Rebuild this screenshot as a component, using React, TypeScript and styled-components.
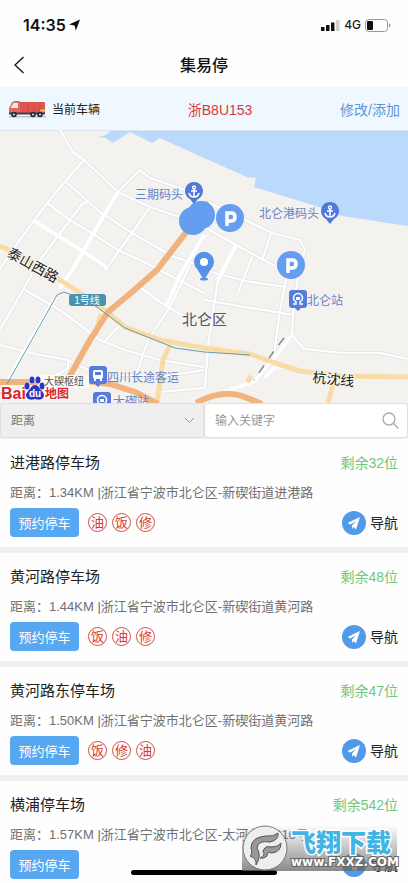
import React from "react";
import styled, { createGlobalStyle } from "styled-components";

const SANS = '"Liberation Sans", "Noto Sans CJK SC", sans-serif';

const GlobalStyle = createGlobalStyle`
  * { box-sizing: border-box; }
  body { margin: 0; background: #fefefe; }
  button, input, select { font-family: inherit; }
`;

const Screen = styled.div`
  position: relative;
  display: flex;
  flex-direction: column;
  height: 100vh;
  overflow: hidden;
  background: #fefefe;
  color: #222;
  font-family: ${SANS};
`;

const StatusBar = styled.div`
  display: flex;
  align-items: center;
  justify-content: space-between;
  flex: none;
  height: 44px;
  padding: 6px 17px 0 23px;
`;

const Clock = styled.div`
  display: flex;
  align-items: center;
  gap: 3px;
  color: #111;
  font: 600 16px/20px Inter, sans-serif;
`;

const Signals = styled.div`
  display: flex;
  align-items: center;
  gap: 4px;
  color: #222;
  font: 500 12px/20px Inter, sans-serif;
`;

const NavBar = styled.header`
  display: grid;
  grid-template-columns: 44px 1fr 44px;
  align-items: center;
  flex: none;
  height: 43px;
`;

const BackButton = styled.button`
  display: flex;
  align-items: center;
  height: 40px;
  padding: 0 0 2px 13px;
  border: 0;
  background: none;
`;

const PageTitle = styled.h1`
  margin: 0;
  text-align: center;
  color: #111;
  font-size: 16px;
  line-height: 24px;
  font-weight: 500;
`;

const VehicleBar = styled.section`
  display: flex;
  justify-content: space-between;
  align-items: center;
  flex: none;
  height: 43px;
  padding: 0 8px;
  background: #f0f8ff;
`;

const CurrentVehicle = styled.div`
  display: flex;
  align-items: center;
  gap: 5px;
  font-size: 12px;
`;

const Plate = styled.strong`
  font-size: 14px;
  font-weight: 400;
  color: #d83a3e;
`;

const EditLink = styled.a`
  font-size: 14px;
  color: #5d95dc;
  text-decoration: none;
`;

const MapArea = styled.section`
  flex: none;
  height: 273px;
  background: #f3f2ef;
  overflow: hidden;
  svg { display: block; width: 100%; height: 100%; }
`;

const Filters = styled.form`
  display: grid;
  grid-template-columns: 1fr 1fr;
  flex: none;
  height: 36px;
  background: #eee;
`;

const Field = styled.label<{ $shade: string }>`
  display: flex;
  align-items: center;
  height: 35px;
  padding: 0 8px 0 10px;
  border: 1px solid #e0e0e0;
  border-radius: 4px;
  background: ${(p) => p.$shade};
`;

const SortSelect = styled.select`
  flex: 1;
  min-width: 0;
  padding: 0;
  border: 0;
  appearance: none;
  background: transparent;
  color: #777;
  font-size: 12px;
  line-height: 20px;
  outline: none;
`;

const SearchInput = styled.input`
  flex: 1;
  min-width: 0;
  padding: 0;
  border: 0;
  background: transparent;
  font-size: 12px;
  line-height: 20px;
  outline: none;
  &::placeholder { color: #999; opacity: 1; }
`;

const LotList = styled.ul`
  flex: 1;
  min-height: 0;
  margin: 0;
  padding: 0;
  overflow-y: auto;
  scrollbar-width: none;
  list-style: none;
`;

const LotItem = styled.li`
  padding: 12px 10px 10px;
  border-bottom: 6px solid #f0f0f0;
`;

const LotRow = styled.div`
  display: flex;
  align-items: center;
  justify-content: space-between;
`;

const LotName = styled.h2`
  margin: 0;
  font-size: 15px;
  line-height: 24px;
  font-weight: 400;
`;

const Remaining = styled.span`
  font-size: 14px;
  line-height: 24px;
  color: #70c77c;
`;

const Address = styled.p`
  margin: 8px 0 5px;
  font-size: 13px;
  line-height: 20px;
  color: #707070;
  white-space: nowrap;
`;

const Actions = styled.div`
  display: flex;
  align-items: center;
  gap: 5px;
`;

const ReserveButton = styled.button`
  width: 69px;
  height: 29px;
  margin-right: 4px;
  padding: 0;
  border: 0;
  border-radius: 4px;
  background: #58a7f1;
  color: #fff;
  font-size: 13px;
`;

const Tag = styled.span`
  display: flex;
  align-items: center;
  justify-content: center;
  width: 19px;
  height: 19px;
  border: 1px solid #e04a45;
  border-radius: 50%;
  color: #dc3632;
  font-size: 13px;
  line-height: 17px;
`;

const NavigateButton = styled.button`
  display: flex;
  align-items: center;
  gap: 4px;
  padding: 0;
  border: 0;
  background: none;
  color: #222;
  font-size: 14px;
  line-height: 24px;
`;

const HomeIndicator = styled.div`
  position: absolute;
  bottom: 8px;
  left: 50%;
  width: 146px;
  height: 5px;
  margin-left: -73px;
  border-radius: 3px;
  background: #000;
`;

const Watermark = styled.div`
  position: absolute;
  right: 11px;
  bottom: 12px;
  display: flex;
  align-items: center;
  gap: 3px;
  height: 46px;
  width: 155px;
  background: linear-gradient(rgba(120, 120, 120, 0), rgba(100, 100, 100, 0.75));
  svg { flex: none; }
`;

const MarkText = styled.div`
  display: flex;
  flex-direction: column;
  white-space: nowrap;
`;

const MarkName = styled.span`
  color: #41b4e6;
  font: 900 25px/28px "Noto Sans CJK SC", sans-serif;
  -webkit-text-stroke: 3px #fff;
  paint-order: stroke fill;
`;

const MarkSite = styled.span`
  color: #fff;
  font: 700 12px/14px "DejaVu Sans", sans-serif;
  -webkit-text-stroke: 2px #666;
  paint-order: stroke fill;
`;

const Truck = () => (
  <svg width="39" height="18" viewBox="0 0 39 18" aria-hidden="true">
    <path d="M1 16h37v1.500H1z" fill="#b9c1cb" />
    <path d="M12 2h25v11H12z" fill="#df544f" />
    <path d="M20 2v11M26 2v11M32 2v11" stroke="#cf4844" />
    <path d="M1 13V8l3-5.500Q5 1 7 1h5v12z" fill="#e8645c" />
    <path d="M2.500 8L5.500 3H10v5z" fill="#e3f3fb" />
    <path d="M1 12.500h36v2H1z" fill="#3b4356" />
    <path d="M32 9.500h5v2h-5z" fill="#f4c04b" />
    {[6, 25, 32].map((x) => (
      <g key={x}>
        <circle cx={x} cy="14.500" r="2.800" fill="#262c40" />
        <circle cx={x} cy="14.500" r="1.100" fill="#cfd5de" />
      </g>
    ))}
  </svg>
);

const thinRoads = [
  "M60 0L73 22L84 30L118 62L150 77L180 87",
  "M84 30L62 55L47 73L33 92L14 118L0 139",
  "M118 62L140 40L150 48L185 60",
  "M66 52L100 82L132 103L172 126L204 137",
  "M47 73L70 90L90 102L118 120L146 133L175 148L204 163",
  "M88 71L80 76L78 80L70 90L40 130L20 165L0 200",
  "M150 77L132 103L118 122L105 141",
  "M208 72L245 90L272 103L300 110L305 120L300 135",
  "M196 92L236 115L275 136",
  "M271 104L262 130",
  "M252 127L237 165",
  "M25 160L60 180L100 210L125 220L160 230L204 237",
  "M120 195L105 211",
  "M0 215L40 225L68 230L88 240",
  "M68 230V238L52 248",
  "M136 154L160 172L180 184L204 190",
  "M190 135L170 177L148 210L136 245",
  "M120 245L165 246L204 240",
  "M160 262L204 258",
  "M204 170L245 177L294 185",
  "M218 150L213 182L208 215L205 258",
  "M204 140L245 151L286 157",
  "M287 145L280 180L274 226",
  "M298 145L293 185L292 205L304 219L345 223L380 223L408 229",
];

const thickRoads = [
  "M118 62L100 92L73 139L60 158",
  "M33 90L98 131L108 139",
  "M236 115L218 150",
  "M204 105L180 145L166 177",
  "M56 166L6 254",
  "M265 247L276 236L290 238",
];

const ParkingPin = ({ x, y }: { x: number; y: number }) => (
  <g transform={`translate(${x} ${y})`}>
    <circle r="14" fill="#659df0" />
    <path d="M-3 8V-5H1Q5-5 5-1T1 3H-3" fill="none" stroke="#fff" strokeWidth="3.500" />
  </g>
);

const HarbourPin = ({ x, y }: { x: number; y: number }) => (
  <g transform={`translate(${x} ${y})`}>
    <path d="M0 12L-4 7A9 9 0 1 1 4 7Z" fill="#5378dc" />
    <circle cy="-4.500" r="1.500" fill="none" stroke="#fff" strokeWidth="1.300" />
    <path d="M0-3V5M-3-1H3M-5 1Q-4 5 0 5Q4 5 5 1" fill="none" stroke="#fff" strokeWidth="1.500" />
  </g>
);

const StationPin = ({ x, y, bus }: { x: number; y: number; bus?: boolean }) => (
  <g transform={`translate(${x} ${y})`}>
    <path d="M-6-9H6Q9-9 9-6V6Q9 9 6 9H3L0 12L-3 9H-6Q-9 9-9 6V-6Q-9-9-6-9Z" fill="#567cdc" />
    {bus ? (
      <>
        <rect x="-5" y="-5" width="10" height="9" rx="2" fill="#fff" />
        <path d="M-3-3H3V0H-3Z" fill="#567cdc" />
        <path d="M-3 4V6M3 4V6" stroke="#fff" strokeWidth="2" />
      </>
    ) : (
      <>
        <path d="M-5 5H-2V3A4.500 4.500 0 1 1 2 3V5H5" fill="none" stroke="#fff" strokeWidth="1.500" />
        <path d="M-2 1V-2H2V1Z" fill="#fff" />
      </>
    )}
  </g>
);

const CityMap = () => (
  <svg viewBox="0 0 408 273" preserveAspectRatio="xMidYMid slice" role="img" aria-label="停车场地图" fontFamily={SANS}>
    <path fill="#bbd9fa" d="M97 7L104 6L112 0H408V96L342 86L319 77L254 57L256 48L247 47L204 28L160 8L152 13L130 2L113 13L106 8Z" />
    <path d="M0 .5H408" stroke="#dbe3f0" />
    <g fill="none" strokeLinejoin="round">
      {thinRoads.map((d) => <path key={d} d={d} stroke="#e6e5eb" strokeWidth="4" />)}
      {thickRoads.map((d) => <path key={d} d={d} stroke="#eeecf1" strokeWidth="5" />)}
      {thinRoads.map((d) => <path key={d} d={d} stroke="#fff" strokeWidth="2.200" />)}
      {thickRoads.map((d) => <path key={d} d={d} stroke="#fff" strokeWidth="4" />)}
      <path d="M292 205L274 228L254 252L204 268" stroke="#fff" strokeWidth="3" />
      <path d="M284 208L274 221L254 250" stroke="#888" strokeWidth="1.500" strokeDasharray="9 8" />
      <g stroke="#f9dca5">
        <path d="M0 116L20 125L60 150L85 166L107 182L125 197L160 210L204 218L250 224L275 233L300 241L340 246L408 247" strokeWidth="5" />
        <path d="M170 215L163 230L157 273M101 184L95 205M335 248L328 273M251 246L247 252" strokeWidth="5" />
      </g>
      <g stroke="#f1b37e">
        <path d="M194 92L157 140L132 162L108 182L90 210L68 249" strokeWidth="6" />
        <path d="M0 252H40M65 248L110 254L135 262L158 274M196 273Q222 259 242 266L262 274" strokeWidth="6" />
      </g>
      <path d="M7 254L57 165L64 162L90 172L125 198L175 218L204 222L250 225" stroke="#629dad" />
    </g>

    <g fill="#6883c5" fontSize="12">
      <text x="135" y="69">三期码头</text>
      <text x="259" y="88">北仑港码头</text>
      <text x="307" y="175">北仑站</text>
      <text x="107" y="252">四川长途客运</text>
      <text x="113" y="276">大碶站</text>
    </g>
    <text x="182" y="195" fontSize="15" fill="#555568">北仑区</text>
    <g fontSize="14" fill="#222" stroke="#f9f7ef" strokeWidth="2" paintOrder="stroke">
      <text transform="translate(6 126) rotate(29)">泰山西路</text>
      <text transform="translate(312 252) rotate(6)">杭沈线</text>
    </g>

    <rect x="69" y="164" width="37" height="12" rx="3" fill="#4993ae" />
    <text x="87" y="174" fontSize="10" fill="#fff" textAnchor="middle">1号线</text>

    <HarbourPin x={194} y={62} />
    <HarbourPin x={330} y={82} />
    <StationPin x={298} y={169} />
    <StationPin x={98} y={245} bus />
    <StationPin x={102} y={271} />

    <circle cx="206" cy="74" r="3" fill="#f1b37e" />
    <circle cx="193" cy="91" r="14" fill="#659df0" />
    <circle cx="201" cy="85" r="14" fill="#659df0" />
    <ParkingPin x={230} y={88} />
    <ParkingPin x={291} y={135} />
    <path d="M204 150L197 139A10 10 0 1 1 211 139Z" fill="#5790e8" />
    <circle cx="204" cy="132" r="4" fill="#fff" />
    <ellipse cx="204" cy="149" rx="4" ry="1.500" fill="#5790e8" />

    <rect x="38" y="245" width="51" height="13" rx="3" fill="#fbfaf8" />
    <text x="44" y="255" fontSize="10" fill="#555">大碶枢纽</text>
    <g fill="#d9252b" stroke="#fff" strokeWidth="2" paintOrder="stroke" fontWeight="700">
      <text x="1" y="269" fontSize="16">Bai</text>
      <text x="45" y="268" fontSize="12">地图</text>
    </g>
    <g fill="#2a35c0" stroke="#fff" strokeWidth="1" paintOrder="stroke">
      <ellipse cx="27" cy="256" rx="2.500" ry="3.500" />
      <ellipse cx="32" cy="250" rx="2.500" ry="3.500" />
      <ellipse cx="38" cy="250" rx="2.500" ry="3.500" />
      <ellipse cx="42" cy="256" rx="2.500" ry="3.500" />
      <path d="M35 255Q38 255 40 259Q46 264 43 268Q40 271 35 269Q30 271 27 268Q24 264 30 259Q32 255 35 255Z" />
    </g>
    <text x="35" y="267" fontSize="10" fontWeight="700" fill="#fff" textAnchor="middle">du</text>
  </svg>
);

const lots = [
  { name: "进港路停车场", left: 32, km: "1.34", address: "浙江省宁波市北仑区-新碶街道进港路", tags: ["油", "饭", "修"] },
  { name: "黄河路停车场", left: 48, km: "1.44", address: "浙江省宁波市北仑区-新碶街道黄河路", tags: ["饭", "油", "修"] },
  { name: "黄河路东停车场", left: 47, km: "1.50", address: "浙江省宁波市北仑区-新碶街道黄河路", tags: ["饭", "修", "油"] },
  { name: "横浦停车场", left: 542, km: "1.57", address: "浙江省宁波市北仑区-太河北路316号", tags: [] },
];

export default function App() {
  return (
    <Screen>
      <GlobalStyle />
      <StatusBar>
        <Clock>
          14:35
          <svg width="11" height="12" viewBox="0 0 12 12" aria-hidden="true"><path d="M12 0L7.500 12L6 6.500L0 5.500Z" fill="#111" /></svg>
        </Clock>
        <Signals>
          <svg width="19" height="11" viewBox="0 0 19 11" aria-hidden="true">
            <path d="M0 7h3.500v4H0zM5 5h3.500v6H5zM10 2.500h3.500V11H10z" fill="#111" />
            <path d="M15 0h3.500v11H15z" fill="#d0d0d0" />
          </svg>
          4G
          <svg width="26" height="13" viewBox="0 0 26 13" aria-hidden="true">
            <rect x=".5" y=".5" width="22" height="12" rx="3" fill="none" stroke="#999" />
            <rect x="2" y="2" width="6" height="9" rx="1" fill="#111" />
            <path d="M24 4.500q1.500.5 1.500 2t-1.500 2z" fill="#999" />
          </svg>
        </Signals>
      </StatusBar>

      <NavBar>
        <BackButton type="button" aria-label="返回">
          <svg width="12" height="18" viewBox="0 0 12 18" fill="none" stroke="#111" strokeWidth="1.300"><path d="M10.500 1L2 9L10.500 17" /></svg>
        </BackButton>
        <PageTitle>集易停</PageTitle>
      </NavBar>

      <VehicleBar>
        <CurrentVehicle><Truck />当前车辆</CurrentVehicle>
        <Plate>浙B8U153</Plate>
        <EditLink href="#vehicle">修改/添加</EditLink>
      </VehicleBar>

      <MapArea><CityMap /></MapArea>

      <Filters>
        <Field $shade="#efefef">
          <SortSelect aria-label="排序"><option>距离</option></SortSelect>
          <svg width="11" height="7" viewBox="0 0 11 7" fill="none" stroke="#999" aria-hidden="true"><path d="M1 1L5.500 5.500L10 1" /></svg>
        </Field>
        <Field $shade="#fff">
          <SearchInput type="search" aria-label="关键字" placeholder="输入关键字" />
          <svg width="17" height="17" viewBox="0 0 17 17" fill="none" stroke="#aaa" strokeWidth="1.300" aria-hidden="true"><circle cx="7" cy="7" r="6" /><path d="M11.500 11.500L16.500 16.500" /></svg>
        </Field>
      </Filters>

      <LotList>
        {lots.map((lot) => (
          <LotItem key={lot.name}>
            <LotRow>
              <LotName>{lot.name}</LotName>
              <Remaining>剩余{lot.left}位</Remaining>
            </LotRow>
            <Address>距离：{lot.km}KM |{lot.address}</Address>
            <LotRow>
              <Actions>
                <ReserveButton type="button">预约停车</ReserveButton>
                {lot.tags.map((tag) => <Tag key={tag}>{tag}</Tag>)}
              </Actions>
              <NavigateButton type="button">
                <svg width="24" height="24" viewBox="0 0 24 24" aria-hidden="true">
                  <circle cx="12" cy="12" r="12" fill="#5199e9" />
                  <path d="M18 6L14 18.500L11.500 16L10 18V14.500L14 10L8.500 13.500L5.500 12Z" fill="#fff" />
                </svg>
                导航
              </NavigateButton>
            </LotRow>
          </LotItem>
        ))}
      </LotList>

      <HomeIndicator />
      <Watermark>
        <svg width="46" height="46" viewBox="0 0 46 46" aria-hidden="true">
          <circle cx="23" cy="23" r="22" fill="#eee" stroke="#777" />
          <g fill="#999" stroke="#555">
            <path d="M8 31Q11 29 9 23Q9 12 24 11Q31 12 36 8Q37 15 28 17Q16 15 15 23Q20 31 14 40Q15 33 8 31Z" />
            <path d="M18 33Q24 30 21 27Q22 20 30 22Q36 22 39 18Q39 27 30 28Q25 26 25 31Q22 34 18 33Z" />
          </g>
        </svg>
        <MarkText>
          <MarkName>飞翔下载</MarkName>
          <MarkSite>www.FXXZ.COM</MarkSite>
        </MarkText>
      </Watermark>
    </Screen>
  );
}
